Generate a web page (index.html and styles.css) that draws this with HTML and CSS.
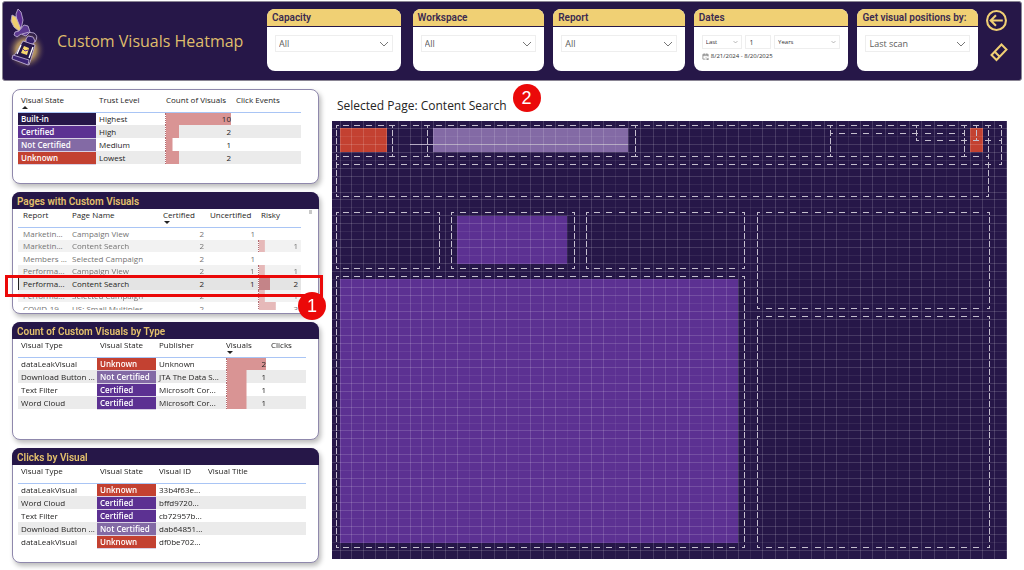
FILE: index.html
```html
<!DOCTYPE html>
<html lang="en">
<head>
<meta charset="utf-8">
<title>Custom Visuals Heatmap</title>
<link rel="stylesheet" href="styles.css">
</head>
<body>
<header class="topbar">
  <svg class="logo" viewBox="0 0 44 76" aria-hidden="true">
    <defs><radialGradient id="glow"><stop offset="0" stop-color="#f0cf70"/><stop offset=".5" stop-color="#c9a564" stop-opacity=".8"/><stop offset="1" stop-color="#261748" stop-opacity="0"/></radialGradient></defs>
    <circle cx="20" cy="47" r="20" fill="url(#glow)"/>
    <g stroke="#b9a9cf" stroke-width=".9" stroke-linejoin="round">
      <path d="M12 6l3 3 2 8-2 9-4-7-1-8z" fill="#5c2e91"/>
      <path d="M6 12l4 2 5 12-1 3-6-5-3-6z" fill="#f0cf70"/>
      <path d="M13 28l5-6 4 1 2 6-4 4-5-2-4 3-3-2 1-3z" fill="#5c3a91"/>
      <path d="M16 31q7-3 12-1 5 3 1 9" fill="none"/>
      <path d="M20 36l2-3 5 1 2 4-2 3-7-1z" fill="#35206a"/>
      <path d="M17 38l12 4-4 14-2 6-17-7 4-5z" fill="#261748"/>
      <path d="M7 52l16 5-1 5-16-6z" fill="#3c2475"/>
    </g>
    <path d="M18 43l5 2-2 7-6-2z" fill="#f6d66c"/>
    <path d="M15 42l-4 9M27 44l-4 11" stroke="#fff" stroke-width="1.300" fill="none"/>
    <path d="M17 46l2 2 3-1" stroke="#5c2e91" fill="none"/>
  </svg>
  <h1 class="title">Custom Visuals Heatmap</h1>
  <div class="slicers">
    <section class="slicer"><label class="slicer-head" for="cap">Capacity</label><div class="slicer-body"><span class="pick"><select id="cap"><option>All</option></select><svg viewBox="0 0 10 6"><path d="M1 1l4 4 4-4"/></svg></span></div></section>
    <section class="slicer"><label class="slicer-head" for="wsp">Workspace</label><div class="slicer-body"><span class="pick"><select id="wsp"><option>All</option></select><svg viewBox="0 0 10 6"><path d="M1 1l4 4 4-4"/></svg></span></div></section>
    <section class="slicer"><label class="slicer-head" for="rep">Report</label><div class="slicer-body"><span class="pick"><select id="rep"><option>All</option></select><svg viewBox="0 0 10 6"><path d="M1 1l4 4 4-4"/></svg></span></div></section>
    <section class="slicer"><label class="slicer-head" for="rel">Dates</label>
      <div class="slicer-body dates">
        <div class="date-row">
          <span class="pick small"><select id="rel"><option>Last</option></select><svg viewBox="0 0 10 6"><path d="M1 1l4 4 4-4"/></svg></span>
          <input class="count" type="text" value="1" aria-label="Number of periods">
          <span class="pick small"><select aria-label="Period"><option>Years</option></select><svg viewBox="0 0 10 6"><path d="M1 1l4 4 4-4"/></svg></span>
        </div>
        <div class="range"><svg viewBox="0 0 8 8"><path d="M7 4V1.500H1V7H4M1 3H7M2.500 0.500V2M5.500 0.500V2M4.500 5l2.500 2.500M7 5.500V7.500H5"/></svg>8/21/2024 - 8/20/2025</div>
      </div></section>
    <section class="slicer"><label class="slicer-head" for="pos">Get visual positions by:</label><div class="slicer-body"><span class="pick"><select id="pos"><option>Last scan</option></select><svg viewBox="0 0 10 6"><path d="M1 1l4 4 4-4"/></svg></span></div></section>
  </div>
  <nav class="tools">
    <button class="tool" aria-label="Back"><svg viewBox="0 0 20 20"><circle cx="10" cy="10" r="9"/><path d="M16 10H5M9.500 5L4.500 10l5 5"/></svg></button>
    <button class="tool" aria-label="Clear filters"><svg class="eraser" viewBox="0 0 20 20"><path d="M12.500 2l5 5L7.500 17.500l-5-5zM6 9.500l4.500 4.500"/></svg></button>
  </nav>
</header>

<main class="report">
  <div class="side">
    <section class="panel plain">
      <table class="grid t-state">
        <colgroup><col class="c1"><col class="c2"><col class="c3"><col></colgroup>
        <thead><tr><th><span class="up">Visual State</span></th><th>Trust Level</th><th>Count of Visuals</th><th>Click Events</th></tr></thead>
        <tbody>
          <tr><td class="builtin">Built-in</td><td>Highest</td><td class="bar" style="--v:100%">10</td><td></td></tr>
          <tr><td class="cert">Certified</td><td>High</td><td class="bar" style="--v:20%">2</td><td></td></tr>
          <tr><td class="notcert">Not Certified</td><td>Medium</td><td class="bar" style="--v:10%">1</td><td></td></tr>
          <tr><td class="unknown">Unknown</td><td>Lowest</td><td class="bar" style="--v:20%">2</td><td></td></tr>
        </tbody>
      </table>
    </section>

    <section class="panel">
      <h2 class="panel-head">Pages with Custom Visuals</h2>
      <div class="scroll">
        <table class="grid t-pages">
          <colgroup><col class="c1"><col class="c2"><col class="c3"><col class="c4"><col></colgroup>
          <thead><tr><th>Report</th><th>Page Name</th><th><span class="down">Certified</span></th><th>Uncertified</th><th>Risky</th></tr></thead>
          <tbody>
            <tr><td>Marketin...</td><td>Campaign View</td><td class="num">2</td><td class="num">1</td><td></td></tr>
            <tr><td>Marketin...</td><td>Content Search</td><td class="num">2</td><td></td><td class="bar" style="--v:14%">1</td></tr>
            <tr><td>Members ...</td><td>Selected Campaign</td><td class="num">2</td><td class="num">1</td><td></td></tr>
            <tr><td>Performa...</td><td>Campaign View</td><td class="num">2</td><td class="num">1</td><td class="bar" style="--v:14%">1</td></tr>
            <tr class="selected"><td>Performa...</td><td>Content Search</td><td class="num">2</td><td class="num">1</td><td class="bar" style="--v:27%">2</td></tr>
            <tr><td>Performa...</td><td>Selected Campaign</td><td class="num">2</td><td></td><td class="bar" style="--v:14%">1</td></tr>
            <tr><td>COVID-19 ...</td><td>US: Small Multiples</td><td class="num">2</td><td></td><td class="bar" style="--v:40%">3</td></tr>
          </tbody>
        </table>
        <span class="thumb"></span>
      </div>
      <div class="callout"><span class="marker">1</span></div>
    </section>

    <section class="panel">
      <h2 class="panel-head">Count of Custom Visuals by Type</h2>
      <table class="grid t-types">
        <colgroup><col class="c1"><col class="c2"><col class="c3"><col class="c4"><col></colgroup>
        <thead><tr><th>Visual Type</th><th>Visual State</th><th>Publisher</th><th class="flush"><span class="down">Visuals</span></th><th>Clicks</th></tr></thead>
        <tbody>
          <tr><td>dataLeakVisual</td><td class="unknown">Unknown</td><td>Unknown</td><td class="bar" style="--v:100%">2</td><td></td></tr>
          <tr><td>Download Button ...</td><td class="notcert">Not Certified</td><td>JTA The Data S...</td><td class="bar" style="--v:50%">1</td><td></td></tr>
          <tr><td>Text Filter</td><td class="cert">Certified</td><td>Microsoft Cor...</td><td class="bar" style="--v:50%">1</td><td></td></tr>
          <tr><td>Word Cloud</td><td class="cert">Certified</td><td>Microsoft Cor...</td><td class="bar" style="--v:50%">1</td><td></td></tr>
        </tbody>
      </table>
    </section>

    <section class="panel">
      <h2 class="panel-head">Clicks by Visual</h2>
      <table class="grid t-clicks">
        <colgroup><col class="c1"><col class="c2"><col class="c3"><col></colgroup>
        <thead><tr><th>Visual Type</th><th>Visual State</th><th>Visual ID</th><th>Visual Title</th></tr></thead>
        <tbody>
          <tr><td>dataLeakVisual</td><td class="unknown">Unknown</td><td>33b4f63e...</td><td></td></tr>
          <tr><td>Word Cloud</td><td class="cert">Certified</td><td>bffd9720...</td><td></td></tr>
          <tr><td>Text Filter</td><td class="cert">Certified</td><td>cb72957b...</td><td></td></tr>
          <tr><td>Download Button ...</td><td class="notcert">Not Certified</td><td>dab64851...</td><td></td></tr>
          <tr><td>dataLeakVisual</td><td class="unknown">Unknown</td><td>df0be702...</td><td></td></tr>
        </tbody>
      </table>
    </section>
  </div>

  <section class="map">
    <div class="map-head"><h2 class="map-title">Selected Page: Content Search</h2><span class="marker">2</span></div>
    <svg id="heat" class="heat" viewBox="0 0 675 438" preserveAspectRatio="none" role="img" aria-label="Positions of visuals on the page">
      <rect class="f-bg" width="675" height="438"/>
      <rect class="f-red" x="8" y="7" width="47" height="24"/>
      <rect class="f-mauve" x="101" y="7" width="195" height="24"/>
      <rect class="f-violet" x="125" y="95" width="110" height="48"/>
      <rect class="f-violet" x="8" y="158" width="398" height="264"/>
      <rect class="f-red" x="638" y="7" width="13" height="24"/>
      <rect class="f-line" x="78" y="23" width="218" height="1"/>
    </svg>
  </section>
</main>
<script src="heat.js"></script>
</body>
</html>
```
FILE: heat.js
```javascript
// Column and row edges of the heatmap grid.
const cols = [0, 8, 19, 31, 43, 54, 66, 78, 89, 101, 113, 125, 137, 149, 162, 174, 186, 198, 211, 223, 235, 247, 259, 271, 283, 296, 308, 321, 333, 345, 357, 369, 381, 394, 406, 418, 430, 443, 455, 467, 479, 492, 504, 516, 528, 540, 553, 565, 577, 589, 602, 614, 626, 638, 650, 662, 674];
const rows = [0];
for (let k = 0; k < 54; k++) rows.push(Math.floor(7.3 + 7.965 * k));

// Outlines of the visuals: left, top, right, bottom.
const outlines = [
  [4, 4, 669, 43], [4, 4, 60, 35], [95, 4, 303, 35], [303, 4, 498, 35],
  [498, 12, 632, 35], [584, 4, 656, 19], [644, 4, 669, 19], [632, 4, 656, 35],
  [4, 35, 656, 75], [4, 91, 107, 147], [119, 91, 242, 147], [254, 91, 412, 147],
  [425, 91, 657, 187], [425, 195, 657, 426], [4, 155, 412, 426]
];

const svg = document.getElementById('heat');
function path(d, cls) {
  const p = document.createElementNS('http://www.w3.org/2000/svg', 'path');
  p.setAttribute('d', d);
  p.setAttribute('class', cls);
  svg.appendChild(p);
}
const box = (x, y, w, h) => `M${x} ${y}h${w}v${h}h${-w}z`;

const faintCols = [12, 16, 20, 24, 31, 35, 39, 43, 47, 51];
cols.slice(1).forEach((x, i) => path(box(x, 0, 1, 438), faintCols.includes(i + 1) ? 'g-faint' : 'g-line'));
rows.slice(1).forEach((y, i) => path(box(0, y, 675, 1), i % 3 === 1 ? 'g-faint' : 'g-line'));

const dashes = new Set();
for (const [l, t, r, b] of outlines) {
  for (let i = 0; i < cols.length - 1; i++) {
    const c = Math.round((cols[i] + cols[i + 1]) / 2);
    if (c > l + 4 && c < r - 4) for (const y of [t, b]) dashes.add(box(c - 3, y, 6, 1));
  }
  for (let i = 0; i < rows.length - 1; i++) {
    const c = Math.round((rows[i] + rows[i + 1]) / 2);
    if (c > t + 4 && c < b - 4) for (const x of [l, r]) dashes.add(box(x, c - 2, 1, 6));
  }
  for (const x of [l, r]) for (const y of [t, b]) {
    dashes.add(box(x === l ? x : x - 2, y, 3, 1));
    dashes.add(box(x, y === t ? y : y - 2, 1, 3));
  }
}
path([...dashes].join(''), 'dash');
```
FILE: styles.css
```css
* { box-sizing: border-box; }
body { margin: 0; min-height: 100vh; display: flex; flex-direction: column; background: #fff; color: #252423; font-family: "Open Sans", "Noto Sans", sans-serif; font-size: 8px; }
h1, h2 { margin: 0; font-weight: 400; }
select, input, button { font: inherit; color: inherit; margin: 0; padding: 0; }

.topbar { flex: none; display: flex; margin: 1px 2px 0; height: 80px; background: #261748; border: 1px solid #8a8594; border-radius: 3px; padding: 7px 10px 9px 3px; }
.logo { flex: none; width: 44px; height: 76px; margin-top: -6px; }
.title { flex: none; width: 217px; padding: 2px 0 0 7px; align-self: center; color: #dfbd6c; font-size: 16px; line-height: 24px; white-space: nowrap; }
.slicers { flex: 1; display: grid; grid-template-columns: 136fr 131fr 131fr 154fr 120fr; gap: 9px; }
.slicer { display: flex; flex-direction: column; background: #fff; border-radius: 8px; overflow: hidden; }
.slicer:first-child { margin-right: 3px; }
.slicer-head { height: 18px; padding-left: 5px; background: #f0d074; border-bottom: 1px solid #261748; color: #3b2a50; font: 600 10px/18px Roboto, sans-serif; white-space: nowrap; }
.slicer-body { padding: 8px; color: #605e5c; }
.pick { display: grid; align-items: center; height: 17px; border: 1px solid #eee; font-size: 9px; }
.pick select { grid-area: 1 / 1; width: 100%; height: 100%; appearance: none; border: 0; background: none; padding-left: 3px; }
.pick svg { grid-area: 1 / 1; justify-self: end; width: 10px; height: 6px; margin-right: 3px; pointer-events: none; fill: none; stroke: #777; }
.date-row { display: grid; grid-template-columns: 39fr 26fr 65fr; gap: 3px; }
.pick.small, .count { height: 14px; font-size: 6px; color: #333; }
.pick.small svg { width: 5px; height: 4px; }
.count { width: 100%; border: 1px solid #eee; padding-left: 4px; font-size: 7px; }
.range { display: flex; align-items: center; gap: 2px; margin-top: 2px; font-size: 6px; line-height: 10px; white-space: nowrap; color: #333; }
.range svg { width: 7px; height: 7px; fill: none; stroke: #666; stroke-width: .7; }
.tools { flex: none; width: 30px; margin-left: 3px; display: flex; flex-direction: column; align-items: center; gap: 10px; }
.tool { border: 0; background: none; height: 22px; cursor: pointer; }
.tool svg { display: block; width: 21px; height: 21px; fill: none; stroke: #f0cf74; stroke-width: 2; }
.tool .eraser { width: 20px; margin-left: 5px; }

.report { flex: 1; display: grid; grid-template-columns: 307fr 675fr; gap: 13px; padding: 8px 17px 7px 12px; }
.side { display: grid; grid-template-rows: 95fr 122fr 118fr 115fr; gap: 8px; min-width: 0; }
.panel { position: relative; display: flex; flex-direction: column; min-height: 0; background: #fff; border: 1px solid #8f88ac; border-radius: 8px; box-shadow: 2px 3px 5px #bbb; }
.panel-head { flex: none; height: 17px; margin: -1px -1px 0; padding-left: 5px; border-radius: 8px 8px 0 0; background: #261748; color: #e3c06c; font: 600 10px/19px Roboto, sans-serif; }
.scroll { position: relative; height: 101px; overflow: hidden; }
.thumb { position: absolute; top: 1px; right: 6px; width: 3px; height: 4px; background: #c8c8c8; }

.grid { table-layout: fixed; border-collapse: collapse; width: calc(100% - 17px); margin-left: 5px; line-height: 12px; }
.grid th { height: 18px; padding: 0 0 5px 3px; text-align: left; vertical-align: top; font-weight: 400; white-space: nowrap; border-bottom: 1px solid #a9c5f5; }
.grid td { height: 13px; padding: 0 0 0 3px; white-space: nowrap; overflow: hidden; }
.grid tr:nth-child(even) td { height: 12px; }
.grid tbody tr:nth-child(even) { background: #ebebeb; }
.plain .grid { margin-top: 4px; }
.up, .down { position: relative; }
.up::after, .down::after { content: ""; position: absolute; left: 1px; top: 12px; border: 3px solid transparent; border-top: 0; border-bottom: 3px solid #222; }
.down::after { border-bottom: 0; border-top: 3px solid #222; }
.grid .num, .grid .bar { text-align: right; padding-right: 3px; }
.grid .bar { padding-right: 0; background: linear-gradient(#d99494, #d99494) left / var(--v) 100% no-repeat; border-left: 1px dotted #b06a70; }
.builtin, .cert, .notcert, .unknown { color: #fff; font-weight: 600; border-bottom: 1px solid #d8d0e4; }
.builtin { background: #261748; }
.cert { background: #5c3192; }
.notcert { background: #836aa5; }
.unknown { background: #c34131; }

.t-state { width: calc(100% - 22px); }
.t-state .c1 { width: 78px; } .t-state .c2 { width: 69px; } .t-state .c3 { width: 66px; }
.t-state th:nth-child(3) { padding-left: 1px; }
.t-state th:last-child { padding-left: 5px; }
.t-pages { width: calc(100% - 22px); }
.t-pages .c1 { width: 51px; } .t-pages .c2 { width: 91px; } .t-pages .c3 { width: 47px; } .t-pages .c4 { width: 51px; }
.t-pages td:first-child, .t-pages th:first-child { padding-left: 5px; }
.t-pages tbody tr { opacity: .65; }
.t-pages .bar { padding-right: 3px; }
.t-pages tbody .selected { opacity: 1; background: #e4e4e4; box-shadow: inset 1px 0 #222; }
.t-pages .selected .bar { background-image: linear-gradient(#c48488, #c48488); }
.t-types .c1, .t-clicks .c1 { width: 79px; }
.t-types .c2, .t-clicks .c2 { width: 59px; }
.t-types .c3 { width: 70px; } .t-types .c4 { width: 40px; }
.t-types .flush { padding-left: 0; }
.t-types th:last-child { padding-left: 5px; }
.t-clicks .c3 { width: 49px; }

.callout { position: absolute; left: -8px; right: -5px; top: 82px; height: 22px; border: 3px solid #eb0909; }
.marker { display: grid; place-items: center; width: 28px; height: 28px; border-radius: 50%; background: #eb0909; color: #fff; font: 18px/1 "Liberation Sans", sans-serif; }
.callout .marker { position: absolute; right: -6px; top: 14px; z-index: 1; }

.map { display: flex; flex-direction: column; min-width: 0; padding-bottom: 4px; }
.map-head { display: flex; align-items: center; gap: 6px; height: 32px; padding-left: 5px; }
.map-title { font-size: 12px; line-height: 16px; padding-top: 1px; }
.map-head .marker { margin-top: -14px; }
.heat { flex: 1; display: block; width: 100%; min-height: 0; shape-rendering: crispEdges; }
.f-bg { fill: #261748; } .f-red { fill: #c34131; } .f-mauve { fill: #836aa5; } .f-violet { fill: #5c3192; } .f-line { fill: #a99cb9; }
.g-line { fill: #fff; fill-opacity: .15; } .g-faint { fill: #fff; fill-opacity: .07; }
.dash { fill: #c5bfce; }
```
